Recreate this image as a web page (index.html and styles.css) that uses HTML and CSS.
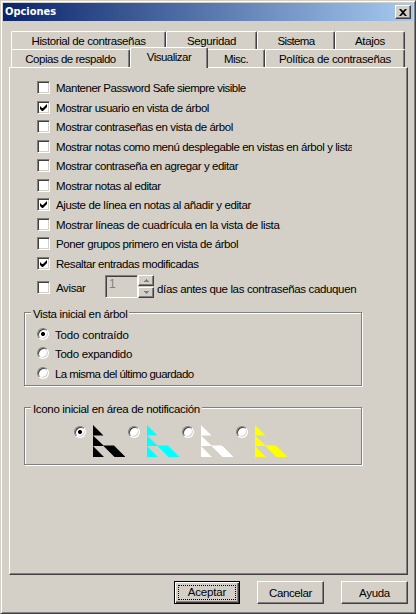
FILE: index.html
```html
<!DOCTYPE html>
<html lang="es">
<head>
<meta charset="utf-8">
<title>Opciones</title>
<link rel="stylesheet" href="styles.css">
</head>
<body>
<svg width="0" height="0" class="defs">
  <symbol id="safe" viewBox="0 0 32 32"><path d="M0 0L10.5 10.5H0ZM0 10.5L10.5 20.5H21L32.5 32H21.5L10.5 21H0ZM0 21L11 32H0Z"/></symbol>
  <symbol id="tick" viewBox="0 0 7 7"><path d="M0 2v3l2 2h1l4-4V0L3 4H2z"/></symbol>
</svg>
<div class="window">
  <header class="titlebar">
    <span>Opciones</span>
    <button class="close" aria-label="Cerrar"><svg width="8" height="7" viewBox="0 0 8 7"><path d="M0 0h2l2 2 2-2h2L5 3.5 8 7H6L4 5 2 7H0l3-3.5z"/></svg></button>
  </header>
  <nav class="tabs back">
    <div class="tab w155 s39">Historial de contraseñas</div>
    <div class="tab w90 s37">Seguridad</div>
    <div class="tab w78 s65">Sistema</div>
    <div class="tab w71 s33">Atajos</div>
  </nav>
  <nav class="tabs front">
    <div class="tab w119 s47">Copias de respaldo</div>
    <div class="tab active s52">Visualizar</div>
    <div class="tab w57 s55">Misc.</div>
    <div class="tab w141 s33">Política de contraseñas</div>
  </nav>
  <main class="pane">
    <div class="options">
      <label class="option s49"><i class="check"></i>Mantener Password Safe siempre visible</label>
      <label class="option s44"><i class="check"><svg width="7" height="7"><use href="#tick"/></svg></i>Mostrar usuario en vista de árbol</label>
      <label class="option s42"><i class="check"></i>Mostrar contraseñas en vista de árbol</label>
      <label class="option s44"><i class="check"></i><span class="clip">Mostrar notas como menú desplegable en vistas en árbol y lista</span></label>
      <label class="option s44"><i class="check"></i>Mostrar contraseña en agregar y editar</label>
      <label class="option s42"><i class="check"></i>Mostrar notas al editar</label>
      <label class="option s39"><i class="check"><svg width="7" height="7"><use href="#tick"/></svg></i>Ajuste de línea en notas al añadir y editar</label>
      <label class="option s33"><i class="check"></i>Mostrar líneas de cuadrícula en la vista de lista</label>
      <label class="option s44"><i class="check"></i>Poner grupos primero en vista de árbol</label>
      <label class="option s44"><i class="check"><svg width="7" height="7"><use href="#tick"/></svg></i>Resaltar entradas modificadas</label>
    </div>
    <div class="notify">
      <label class="option avisar s37"><i class="check"></i>Avisar</label>
      <div class="field">1</div>
      <div class="spin">
        <div class="step"><svg width="5" height="3"><path d="M2 0h1v1h1v1h1v1H0V2h1V1h1z"/></svg></div>
        <div class="step"><svg width="5" height="3"><path d="M0 0h5v1H4v1H3v1H2V2H1V1H0z"/></svg></div>
      </div>
      <span class="days s35">días antes que las contraseñas caduquen</span>
    </div>
    <section class="group view">
      <h2 class="s35">Vista inicial en árbol</h2>
      <label class="choice s15"><i class="radio on"></i>Todo contraído</label>
      <label class="choice s30"><i class="radio"></i>Todo expandido</label>
      <label class="choice s55"><i class="radio"></i>La misma del último guardado</label>
    </section>
    <section class="group tray">
      <h2 class="s33">Icono inicial en área de notificación</h2>
      <div class="icons">
        <label><i class="radio on"></i><svg class="safe black"><use href="#safe"/></svg></label>
        <label><i class="radio"></i><svg class="safe cyan"><use href="#safe"/></svg></label>
        <label><i class="radio"></i><svg class="safe white"><use href="#safe"/></svg></label>
        <label><i class="radio"></i><svg class="safe yellow"><use href="#safe"/></svg></label>
      </div>
    </section>
  </main>
  <footer class="buttons">
    <button class="btn default s15"><span>Aceptar</span></button>
    <button class="btn s37">Cancelar</button>
    <button class="btn s30">Ayuda</button>
  </footer>
</div>
</body>
</html>
```
FILE: styles.css
```css
* { box-sizing: border-box; }
body {
  margin: 0;
  background: #d4d0c8;
  color: #000;
  font: 11.5px/14px "Liberation Sans", Arial, sans-serif;
}
.defs { position: absolute; }
svg { display: block; }
button { font: inherit; color: inherit; padding: 0; border-radius: 0; }

.window {
  width: 416px;
  height: 614px;
  padding: 1px;
  border: 1px solid;
  border-color: #d4d0c8 #404040 #404040 #d4d0c8;
  box-shadow: inset 1px 1px #fff, inset -1px -1px #808080;
}
.titlebar {
  display: flex;
  align-items: center;
  justify-content: space-between;
  height: 18px;
  margin: 1px 1px 0;
  padding: 0 2px;
  background: linear-gradient(90deg, #0a246a, #a6caf0);
  color: #fff;
  font: bold 11px/18px "DejaVu Sans Condensed", Tahoma, sans-serif;
}
.close {
  display: flex;
  align-items: center;
  justify-content: center;
  width: 16px;
  height: 14px;
  color: #000;
  background: #d4d0c8;
  border: 1px solid;
  border-color: #fff #404040 #404040 #fff;
  box-shadow: inset -1px -1px #808080;
}

.tabs { display: flex; align-items: flex-start; padding-left: 9px; }
.back { height: 18px; margin-top: 10px; }
.front { height: 18px; }
.tab {
  height: 18px;
  border: 1px solid;
  border-color: #fff #404040 transparent #fff;
  border-bottom: 0;
  border-radius: 2px 2px 0 0;
  box-shadow: inset -1px 0 #808080;
  background: #d4d0c8;
  text-align: center;
  line-height: 19px;
  white-space: nowrap;
}
.active {
  position: relative;
  width: 78px;
  height: 21px;
  margin: -2px -1px 0 0;
  line-height: 18px;
}
.w155 { width: 155px; }
.w90 { width: 91px; }
.w78 { width: 78px; }
.w71 { width: 70px; }
.w119 { width: 119px; }
.w57 { width: 58px; }
.w141 { width: 140px; }

.pane {
  width: 399px;
  height: 508px;
  margin-left: 7px;
  padding: 13px 0 0 14px;
  border: 1px solid;
  border-color: #fff #404040 #404040 #fff;
  box-shadow: inset -1px -1px #808080;
}
.options { padding-left: 13px; }
.option {
  display: flex;
  align-items: flex-start;
  gap: 6px;
  height: 20px;
  line-height: 15px;
  white-space: nowrap;
}
.option:nth-child(even) { height: 19px; }
.option:last-child { height: 20px; }
.clip { width: 296px; overflow: hidden; }
.check {
  flex: none;
  width: 13px;
  height: 13px;
  padding: 2px;
  background: #fff;
  border: 1px solid;
  border-color: #808080 #fff #fff #808080;
  box-shadow: inset 1px 1px #404040, inset -1px -1px #d4d0c8;
}

.notify { display: flex; height: 37px; margin-top: -2px; padding-left: 13px; }
.avisar { width: 68px; padding-top: 6px; }
.field {
  width: 33px;
  height: 23px;
  padding-left: 3px;
  color: #808080;
  border: 1px solid;
  border-color: #808080 #fff #fff #808080;
  box-shadow: inset 1px 1px #404040;
  font-size: 12px;
  line-height: 17px;
}
.spin { display: grid; gap: 1px; width: 16px; height: 23px; }
.step {
  display: flex;
  align-items: center;
  justify-content: center;
  height: 11px;
  border: 1px solid;
  border-color: #fff #404040 #404040 #fff;
  box-shadow: inset -1px -1px #808080;
  fill: #808080;
}
.days { margin: 7px 0 0 3px; white-space: nowrap; }

.group {
  width: 338px;
  border: 1px solid #808080;
  box-shadow: inset 1px 1px #fff, 1px 1px #fff;
}
.group h2 {
  width: fit-content;
  height: 14px;
  margin: -6px 0 0 6px;
  padding: 0 2px;
  background: #d4d0c8;
  font: inherit;
  white-space: nowrap;
}
.view { height: 74px; }
.tray { height: 58px; margin-top: 21px; }
.choice {
  display: flex;
  gap: 6px;
  height: 19px;
  margin-left: 12px;
  line-height: 14px;
}
.choice:last-child { margin-top: 1px; }
.view h2 { margin-bottom: 7px; }
.radio {
  flex: none;
  width: 12px;
  height: 12px;
  border: 1px solid;
  border-color: #808080 #fff #fff #808080;
  border-radius: 50%;
  background: #fff;
  box-shadow: inset 1px 1px #404040, inset -1px -1px #d4d0c8;
}
.radio.on { background: radial-gradient(circle at 5px 5px, #000 1.7px, #fff 2.3px); }
.icons { display: flex; padding: 9px 0 0 49px; }
.icons label { display: flex; gap: 7px; width: 54px; }
.icons .radio { margin-top: 1px; }
.safe { width: 32px; height: 32px; flex: none; }
.black { fill: #000; }
.cyan { fill: #0ff; }
.white { fill: #fff; }
.yellow { fill: #ff0; }

.buttons { display: flex; gap: 17px; padding: 6px 0 0 172px; }
.btn {
  width: 67px;
  height: 23px;
  background: #d4d0c8;
  border: 1px solid;
  border-color: #fff #404040 #404040 #fff;
  box-shadow: inset -1px -1px #808080;
}
.btn.default {
  width: 66px;
  padding: 3px;
  border-color: #000;
  box-shadow: inset 1px 1px #fff, inset -1px -1px #404040, inset -2px -2px #808080;
}
.default span { display: block; height: 15px; border: 1px dotted #000; line-height: 13px; }

.s15 { letter-spacing: -0.16px; }
.s30 { letter-spacing: -0.3px; }
.s33 { letter-spacing: -0.33px; }
.s35 { letter-spacing: -0.35px; }
.s37 { letter-spacing: -0.37px; }
.s39 { letter-spacing: -0.39px; }
.s42 { letter-spacing: -0.42px; }
.s44 { letter-spacing: -0.44px; }
.s47 { letter-spacing: -0.48px; }
.s49 { letter-spacing: -0.49px; }
.s52 { letter-spacing: -0.52px; }
.s55 { letter-spacing: -0.55px; }
.s65 { letter-spacing: -0.65px; }
```
